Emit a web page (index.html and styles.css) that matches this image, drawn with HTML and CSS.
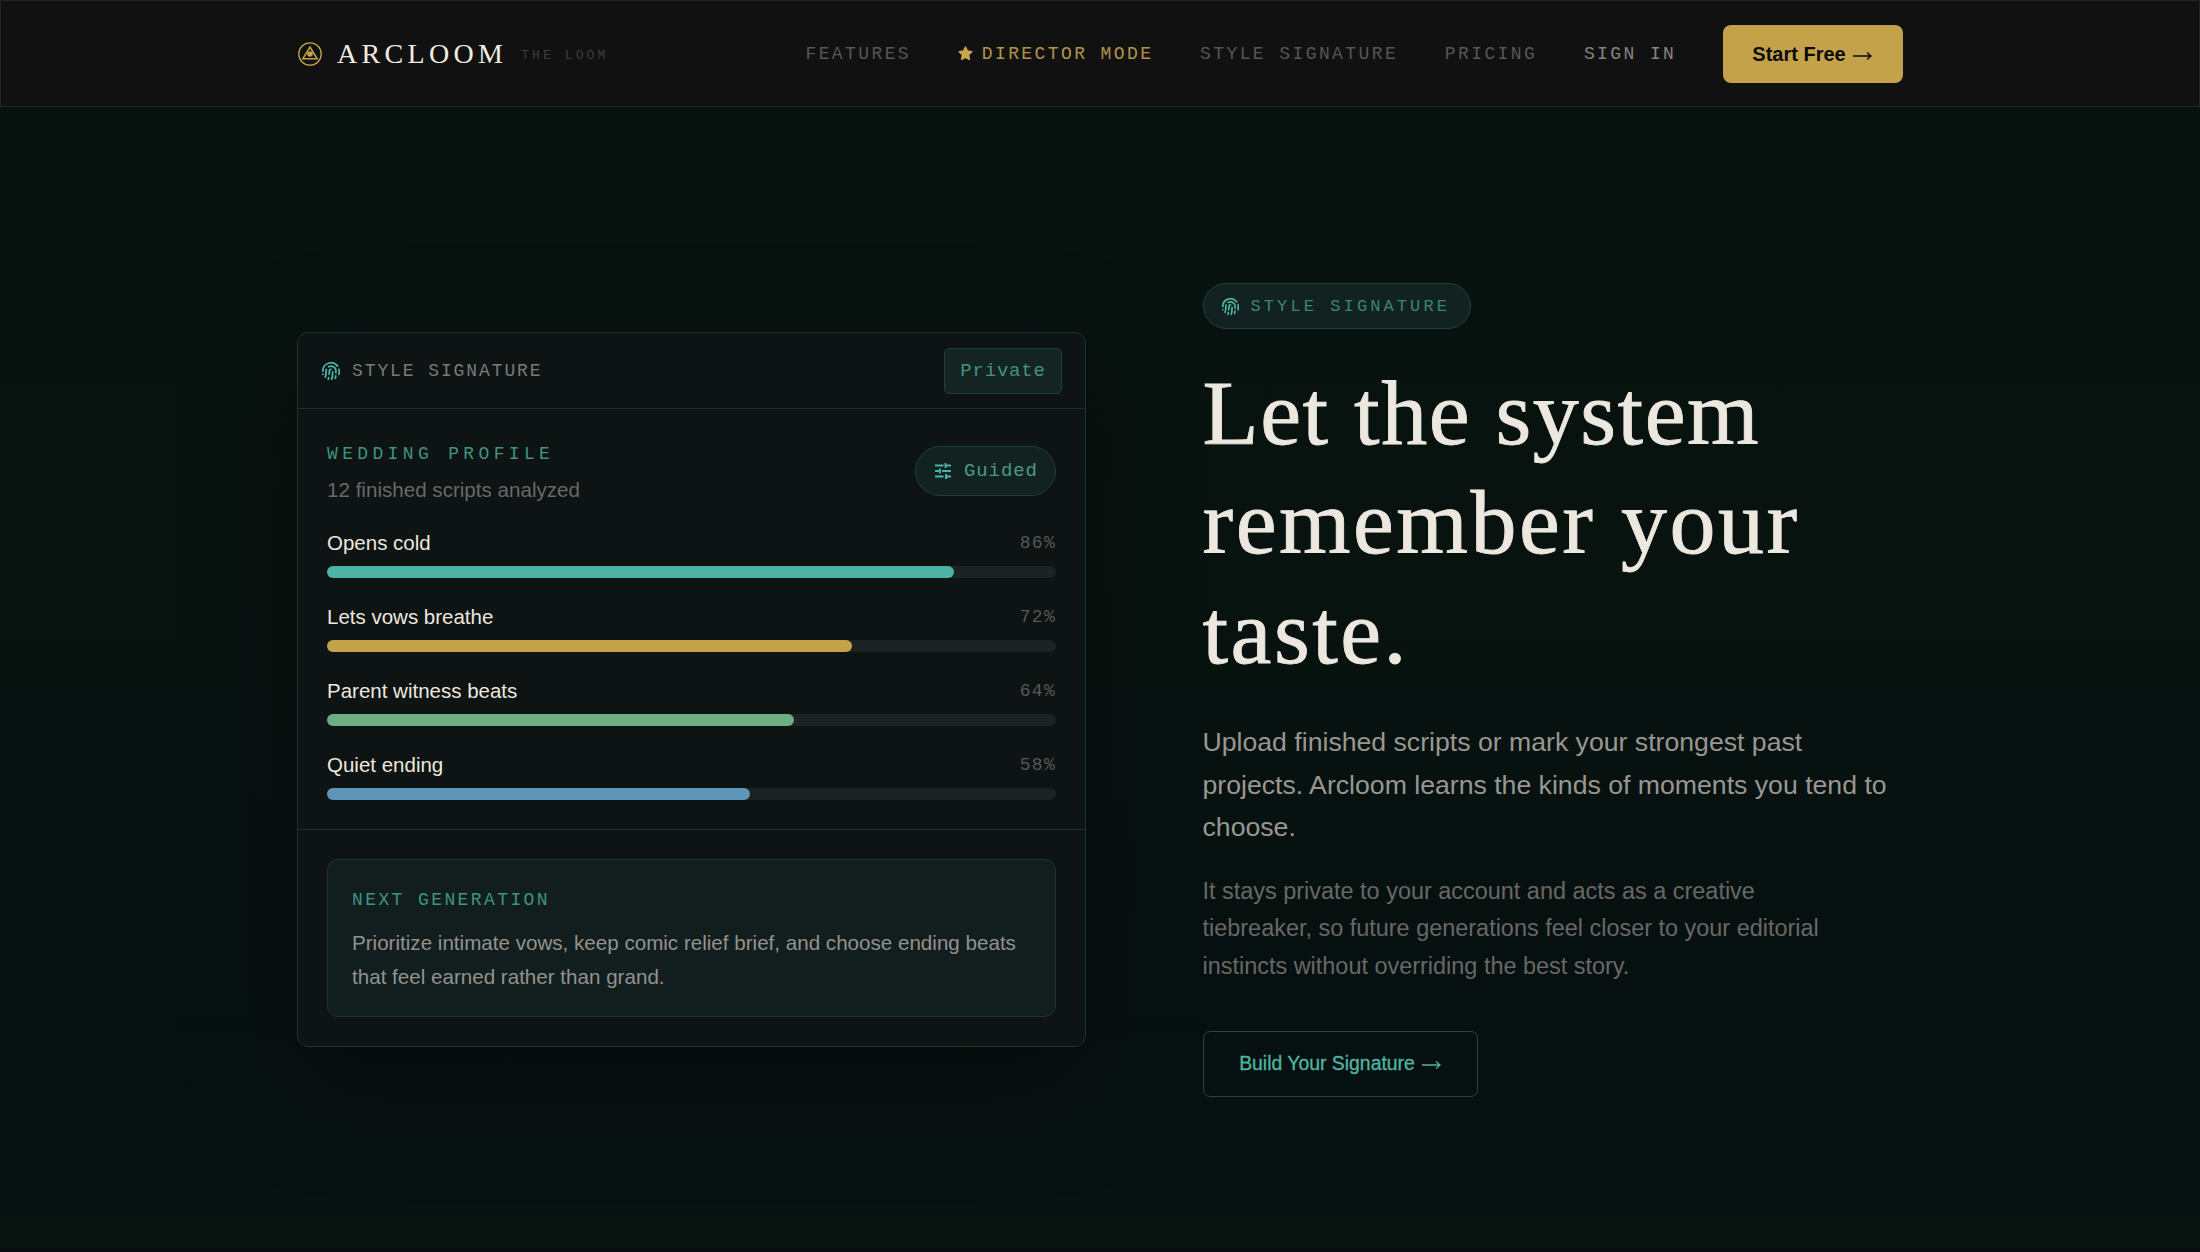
FILE: index.html
```html
<!DOCTYPE html>
<html lang="en">
  <head>
    <meta charset="UTF-8" />
    <meta name="viewport" content="width=device-width, initial-scale=1.0" />
    <title>Arcloom - Style Signature</title>
    <link rel="stylesheet" href="styles.css">
  </head>
  <body>
    <svg class="sprite" xmlns="http://www.w3.org/2000/svg">
      <symbol id="fingerprint" viewBox="1 1 22 22">
        <g fill="none" stroke="currentColor" stroke-width="2.2" stroke-linecap="round">
          <path d="M12 10a2 2 0 0 0-2 2c0 1.020-.1 2.510-.26 4" />
          <path d="M14 13.120c0 2.380 0 6.380-1 8.880" />
          <path d="M17.290 21.020c.12-.6.43-2.300.5-3.020" />
          <path d="M2 12a10 10 0 0 1 18-6" />
          <path d="M2 16h.01" />
          <path d="M21.800 16c.2-2 .131-5.354 0-6" />
          <path d="M5 19.500C5.500 18 6 15 6 12a6 6 0 0 1 .34-2" />
          <path d="M8.650 22c.21-.66.45-1.320.57-2" />
          <path d="M9 6.800a6 6 0 0 1 9 5.200v2" />
        </g>
      </symbol>
    </svg>

    <header class="navbar">
      <div class="nav-inner">
        <a class="logo" href="#">
          <svg class="logo-icon" viewBox="0 0 24 24" fill="none" stroke="currentColor">
            <circle cx="12" cy="12" r="11.2" stroke-width="1.3" />
            <path d="M12 5 19.200 16.800H4.800Z" stroke-width="1.5" />
            <circle cx="12" cy="12" r="2.800" fill="currentColor" stroke="none" />
          </svg>
          <span class="logo-name">ARCLOOM</span>
          <span class="logo-sub">THE LOOM</span>
        </a>
        <nav class="nav-links">
          <a href="#">FEATURES</a>
          <a href="#" class="active">
            <svg class="star" viewBox="0 0 14 14">
              <path d="M7 1 8.800 4.700 12.900 5.300 9.900 8.200 10.600 12.500 7 10.500 3.400 12.500 4.100 8.200 1.100 5.300 5.200 4.700Z" fill="currentColor" stroke="currentColor" stroke-width="1.400" stroke-linejoin="round" />
            </svg>DIRECTOR MODE</a>
          <a href="#">STYLE SIGNATURE</a>
          <a href="#">PRICING</a>
          <a href="#" class="sign-in">SIGN IN</a>
          <a href="#" class="btn-gold">Start Free <svg class="arrow" viewBox="0 0 19 10"><path d="M0 5H18M14 1.500 18 5 14 8.500" /></svg></a>
        </nav>
      </div>
    </header>

    <main class="section">
      <div class="card">
        <div class="card-header">
          <svg class="card-icon"><use href="#fingerprint" /></svg>
          <span class="card-title">STYLE SIGNATURE</span>
          <span class="private">Private</span>
        </div>
        <div class="card-body">
          <div class="profile">
            <div>
              <div class="profile-name">WEDDING PROFILE</div>
              <div class="profile-info">12 finished scripts analyzed</div>
            </div>
            <div class="guided">
              <svg viewBox="0 0 16 16" fill="none" stroke="currentColor" stroke-width="1.900">
                <path d="M0 2.500H8.500M10.500 2.500H16M10.500 0V5M0 8H4M5 5.500V10.500M7 8H16M0 13.500H8.500M11 11V16M11 13.500H16" />
              </svg>
              <span>Guided</span>
            </div>
          </div>
          <div class="trait">
            <div class="trait-row"><span class="trait-name">Opens cold</span><span class="percent">86%</span></div>
            <div class="track"><div class="fill teal" style="width: 86%"></div></div>
          </div>
          <div class="trait">
            <div class="trait-row"><span class="trait-name">Lets vows breathe</span><span class="percent">72%</span></div>
            <div class="track"><div class="fill gold" style="width: 72%"></div></div>
          </div>
          <div class="trait">
            <div class="trait-row"><span class="trait-name">Parent witness beats</span><span class="percent">64%</span></div>
            <div class="track"><div class="fill green" style="width: 64%"></div></div>
          </div>
          <div class="trait">
            <div class="trait-row"><span class="trait-name">Quiet ending</span><span class="percent">58%</span></div>
            <div class="track"><div class="fill blue" style="width: 58%"></div></div>
          </div>
        </div>
        <div class="card-footer">
          <div class="next">
            <div class="next-title">NEXT GENERATION</div>
            <p>Prioritize intimate vows, keep comic relief brief, and choose ending beats<br>that feel earned rather than grand.</p>
          </div>
        </div>
      </div>

      <div class="content">
        <div class="badge">
          <svg><use href="#fingerprint" /></svg>
          <span>STYLE SIGNATURE</span>
        </div>
        <h1>
          <span class="line-1">Let the system</span><br>
          <span class="line-2">remember your</span><br>
          <span class="line-3">taste.</span>
        </h1>
        <p class="lead">Upload finished scripts or mark your strongest past<br>projects. Arcloom learns the kinds of moments you tend to<br>choose.</p>
        <p class="detail">It stays private to your account and acts as a creative<br>tiebreaker, so future generations feel closer to your editorial<br>instincts without overriding the best story.</p>
        <a href="#" class="btn-outline">Build Your Signature <svg class="arrow" viewBox="0 0 19 10"><path d="M0 5H18M14 1.500 18 5 14 8.500" /></svg></a>
      </div>
    </main>
    <footer class="footer"></footer>
  </body>
</html>
```
FILE: styles.css
```css
* {
  box-sizing: border-box;
}
body {
  margin: 0;
  height: 1252px;
  overflow: hidden;
  font-family: "Liberation Sans", Arial, sans-serif;
  background: linear-gradient(180deg, #07120f 0%, #08120f 45%, #07110f 65%, #071011 82%, #08120f 100%);
  color: #ece8df;
}
a {
  color: inherit;
  text-decoration: none;
}
p,
h1 {
  margin: 0;
}
.sprite {
  display: none;
}
.navbar {
  height: 107px;
  background: #111111;
  border: 1.5px solid #242424;
}
.nav-inner {
  width: 1606px;
  height: 100%;
  margin: 0 auto;
  display: flex;
  justify-content: space-between;
  align-items: center;
}
.logo {
  display: flex;
  align-items: center;
}
.logo-icon {
  width: 24px;
  height: 24px;
  margin-left: 1px;
  color: #c4a24a;
}
.logo-name {
  margin-left: 15px;
  font-family: "Liberation Serif", serif;
  font-size: 28px;
  letter-spacing: 4.3px;
  color: #f0ece2;
}
.logo-sub {
  margin-left: 14px;
  padding-top: 3px;
  font-family: "Liberation Mono", monospace;
  font-size: 13px;
  letter-spacing: 3.1px;
  color: #3e3e3e;
}
.nav-links {
  display: flex;
  align-items: center;
  gap: 46.7px;
  font-family: "Liberation Mono", monospace;
  font-size: 18px;
  letter-spacing: 2.4px;
  color: #565656;
}
.nav-links .active {
  color: #b3934a;
}
.star {
  width: 15px;
  height: 15px;
  margin-right: 9px;
  vertical-align: -2px;
  color: #c9a64d;
}
.nav-links .sign-in {
  color: #868480;
}
.btn-gold {
  width: 180px;
  height: 58px;
  padding: 2px 2px 0 0;
  display: flex;
  align-items: center;
  justify-content: center;
  border-radius: 8px;
  background: #c4a24a;
  color: #0b0b0b;
  font-family: "Liberation Sans", Arial, sans-serif;
  font-size: 20px;
  font-weight: bold;
  letter-spacing: 0;
}
.arrow {
  width: 19px;
  height: 10px;
  margin: 2px 0 0 7px;
  fill: none;
  stroke: currentColor;
  stroke-width: 1.3;
}
.section {
  width: 1606px;
  height: 1141px;
  margin: 0 auto;
  display: flex;
}
.card {
  width: 789px;
  height: 715px;
  margin-top: 225px;
  border: 1.5px solid #19332d;
  border-radius: 11px;
  background: #0e1313;
  box-shadow: 0 34px 110px rgba(0, 0, 0, 0.35);
}
.card-header {
  height: 76px;
  padding: 0 23px 0 24px;
  display: flex;
  align-items: center;
  border-bottom: 1px solid #19332d;
}
.card-icon {
  width: 18px;
  height: 18px;
  color: #4db3a2;
}
.card-title {
  margin-left: 12px;
  font-family: "Liberation Mono", monospace;
  font-size: 18px;
  letter-spacing: 1.9px;
  color: #787b78;
}
.private {
  width: 118px;
  height: 46px;
  margin-left: auto;
  border: 1.5px solid #1e4139;
  border-radius: 5px;
  background: #142422;
  color: #45917f;
  font-family: "Liberation Mono", monospace;
  font-size: 19px;
  line-height: 44px;
  letter-spacing: 0.8px;
  text-align: center;
}
.card-body {
  height: 421px;
  padding: 35px 29px 0 29px;
  border-bottom: 1px solid #19332d;
}
.profile {
  height: 68px;
  display: flex;
  justify-content: space-between;
}
.profile-name {
  font-family: "Liberation Mono", monospace;
  font-size: 18px;
  line-height: 20px;
  letter-spacing: 4.35px;
  color: #3d9480;
}
.profile-info {
  margin-top: 12px;
  font-size: 20.6px;
  line-height: 28px;
  color: #696969;
}
.guided {
  width: 141px;
  height: 50px;
  margin-top: 2px;
  padding-left: 19px;
  display: flex;
  align-items: center;
  border: 1.5px solid #1c3e36;
  border-radius: 25px;
  background: #122221;
  color: #4b9a87;
  font-family: "Liberation Mono", monospace;
  font-size: 19px;
  letter-spacing: 0.9px;
}
.guided svg {
  width: 16px;
  height: 16px;
  margin-right: 13px;
  color: #4db3a2;
}
.trait {
  height: 74.1px;
}
.trait-row {
  height: 53.5px;
  padding-top: 10px;
  display: flex;
  justify-content: space-between;
  line-height: 42px;
}
.trait-name {
  font-size: 20.5px;
}
.percent {
  font-family: "Liberation Mono", monospace;
  font-size: 18px;
  letter-spacing: 1.3px;
  color: #555957;
}
.track {
  height: 12px;
  border-radius: 6px;
  background: #1d2322;
}
.fill {
  height: 100%;
  border-radius: 6px;
}
.teal {
  background: #4db3a5;
}
.gold {
  background: #c4a24a;
}
.green {
  background: #6dac84;
}
.blue {
  background: #5d96b8;
}
.card-footer {
  padding: 29px 29px 0;
}
.next {
  height: 158px;
  padding: 30px 0 0 24px;
  border: 1.5px solid #19362f;
  border-radius: 11px;
  background: #121e1e;
  white-space: nowrap;
}
.next-title {
  font-family: "Liberation Mono", monospace;
  font-size: 18px;
  line-height: 20px;
  letter-spacing: 2.4px;
  color: #3d9480;
}
.next p {
  margin-top: 16px;
  font-size: 20.6px;
  line-height: 33.6px;
  color: #92928d;
}
.content {
  margin: 176px 0 0 116.5px;
  white-space: nowrap;
}
.badge {
  width: 268px;
  height: 46px;
  padding-left: 18px;
  display: flex;
  align-items: center;
  border: 1.5px solid #1f433b;
  border-radius: 23px;
  background: #112221;
  color: #3c8573;
  font-family: "Liberation Mono", monospace;
  font-size: 17px;
  letter-spacing: 3.1px;
}
.badge svg {
  width: 17px;
  height: 17px;
  margin-right: 12px;
  color: #4db3a2;
}
h1 {
  margin-top: 30px;
  font-family: "Liberation Serif", Georgia, serif;
  font-size: 92px;
  font-weight: normal;
  line-height: 109.4px;
  -webkit-text-stroke: 0.8px currentColor;
}
.line-1 {
  letter-spacing: 1.5px;
}
.line-2 {
  letter-spacing: 2.5px;
}
.line-3 {
  letter-spacing: 2.5px;
}
.lead {
  margin-top: 34px;
  font-size: 26.65px;
  line-height: 42.5px;
  color: #989792;
}
.detail {
  margin-top: 24px;
  font-size: 23.45px;
  line-height: 37.7px;
  color: #676866;
}
.btn-outline {
  width: 275px;
  height: 66px;
  margin-top: 45px;
  display: flex;
  align-items: center;
  justify-content: center;
  border: 1.5px solid #20483f;
  border-radius: 7px;
  color: #50b5a0;
  font-size: 19.4px;
  -webkit-text-stroke: 0.3px currentColor;
}
.footer {
  height: 4px;
  background: #080c0d;
}
```
